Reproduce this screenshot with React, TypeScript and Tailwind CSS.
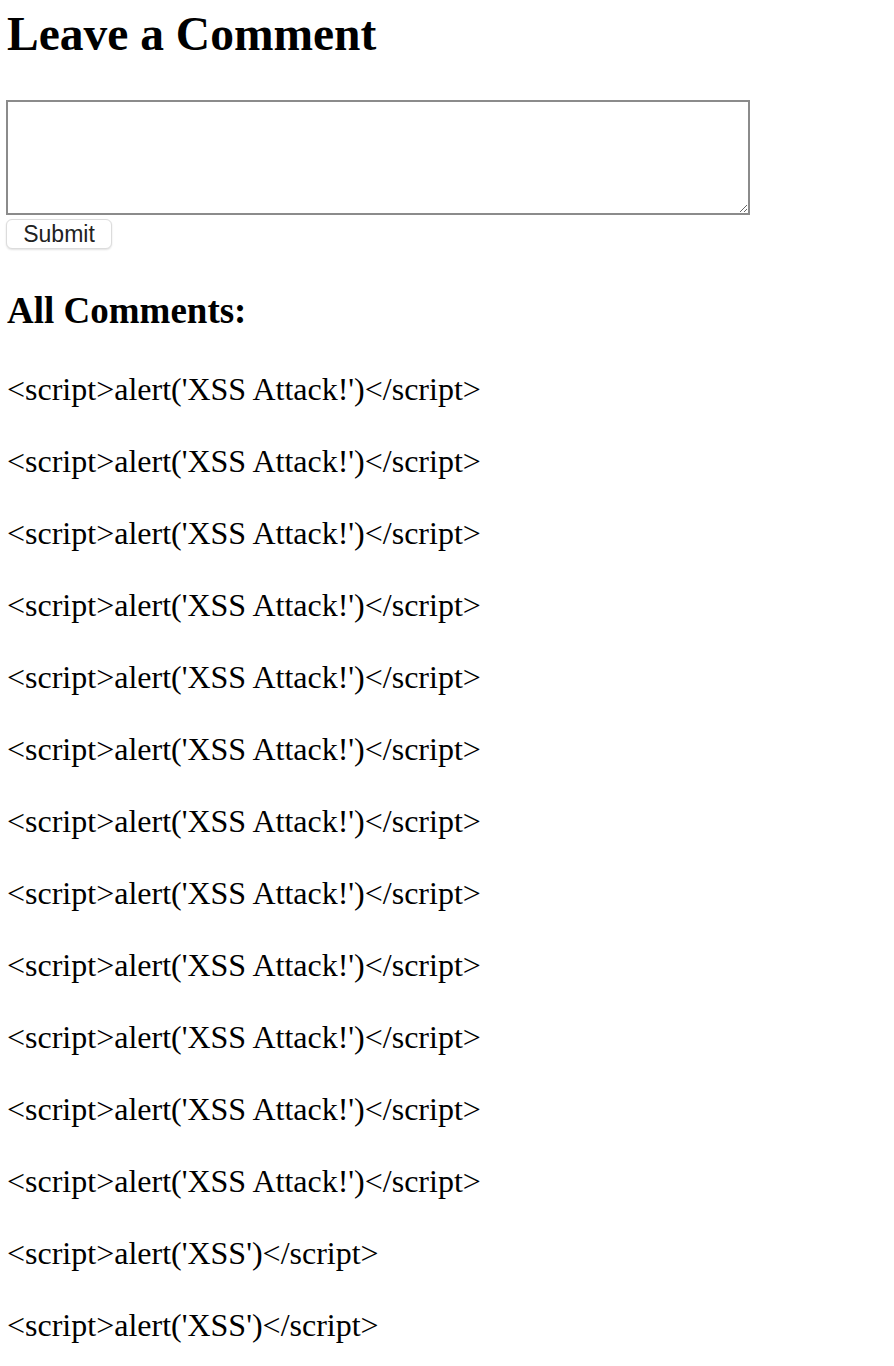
import React from "react";

const comments = [
  ...Array(12).fill("<script>alert('XSS Attack!')</script>"),
  "<script>alert('XSS')</script>",
  "<script>alert('XSS')</script>",
];

export default function App() {
  return (
    <div className="min-h-screen bg-white px-[7px] text-black font-['Liberation_Serif',serif]">
      <h1 className="mt-[7px] text-[47.5px] leading-[54px] font-bold">Leave a Comment</h1>

      {/* Formulir komentar */}
      <div className="mt-[39px] flex flex-col items-start">
        <textarea className="-ml-px block h-[115px] w-[744px] border-2 border-[#8b8b8b] bg-white" />
        <button className="-ml-px mt-[4px] h-[30px] w-[106px] rounded-[6px] border border-[#dcdcdc] bg-white pt-px text-[23px] leading-none text-[#222] shadow-[0_1px_2px_rgba(0,0,0,0.12)] font-['Liberation_Sans',sans-serif]">
          Submit
        </button>
      </div>

      <h2 className="mt-[42px] text-[37px] leading-[40px] font-bold">All Comments:</h2>

      <div className="mt-[40px] flex flex-col gap-[36px]">
        {comments.map((text, i) => (
          <p key={i} className="text-[32px] leading-[36px]">
            {text}
          </p>
        ))}
      </div>
    </div>
  );
}
